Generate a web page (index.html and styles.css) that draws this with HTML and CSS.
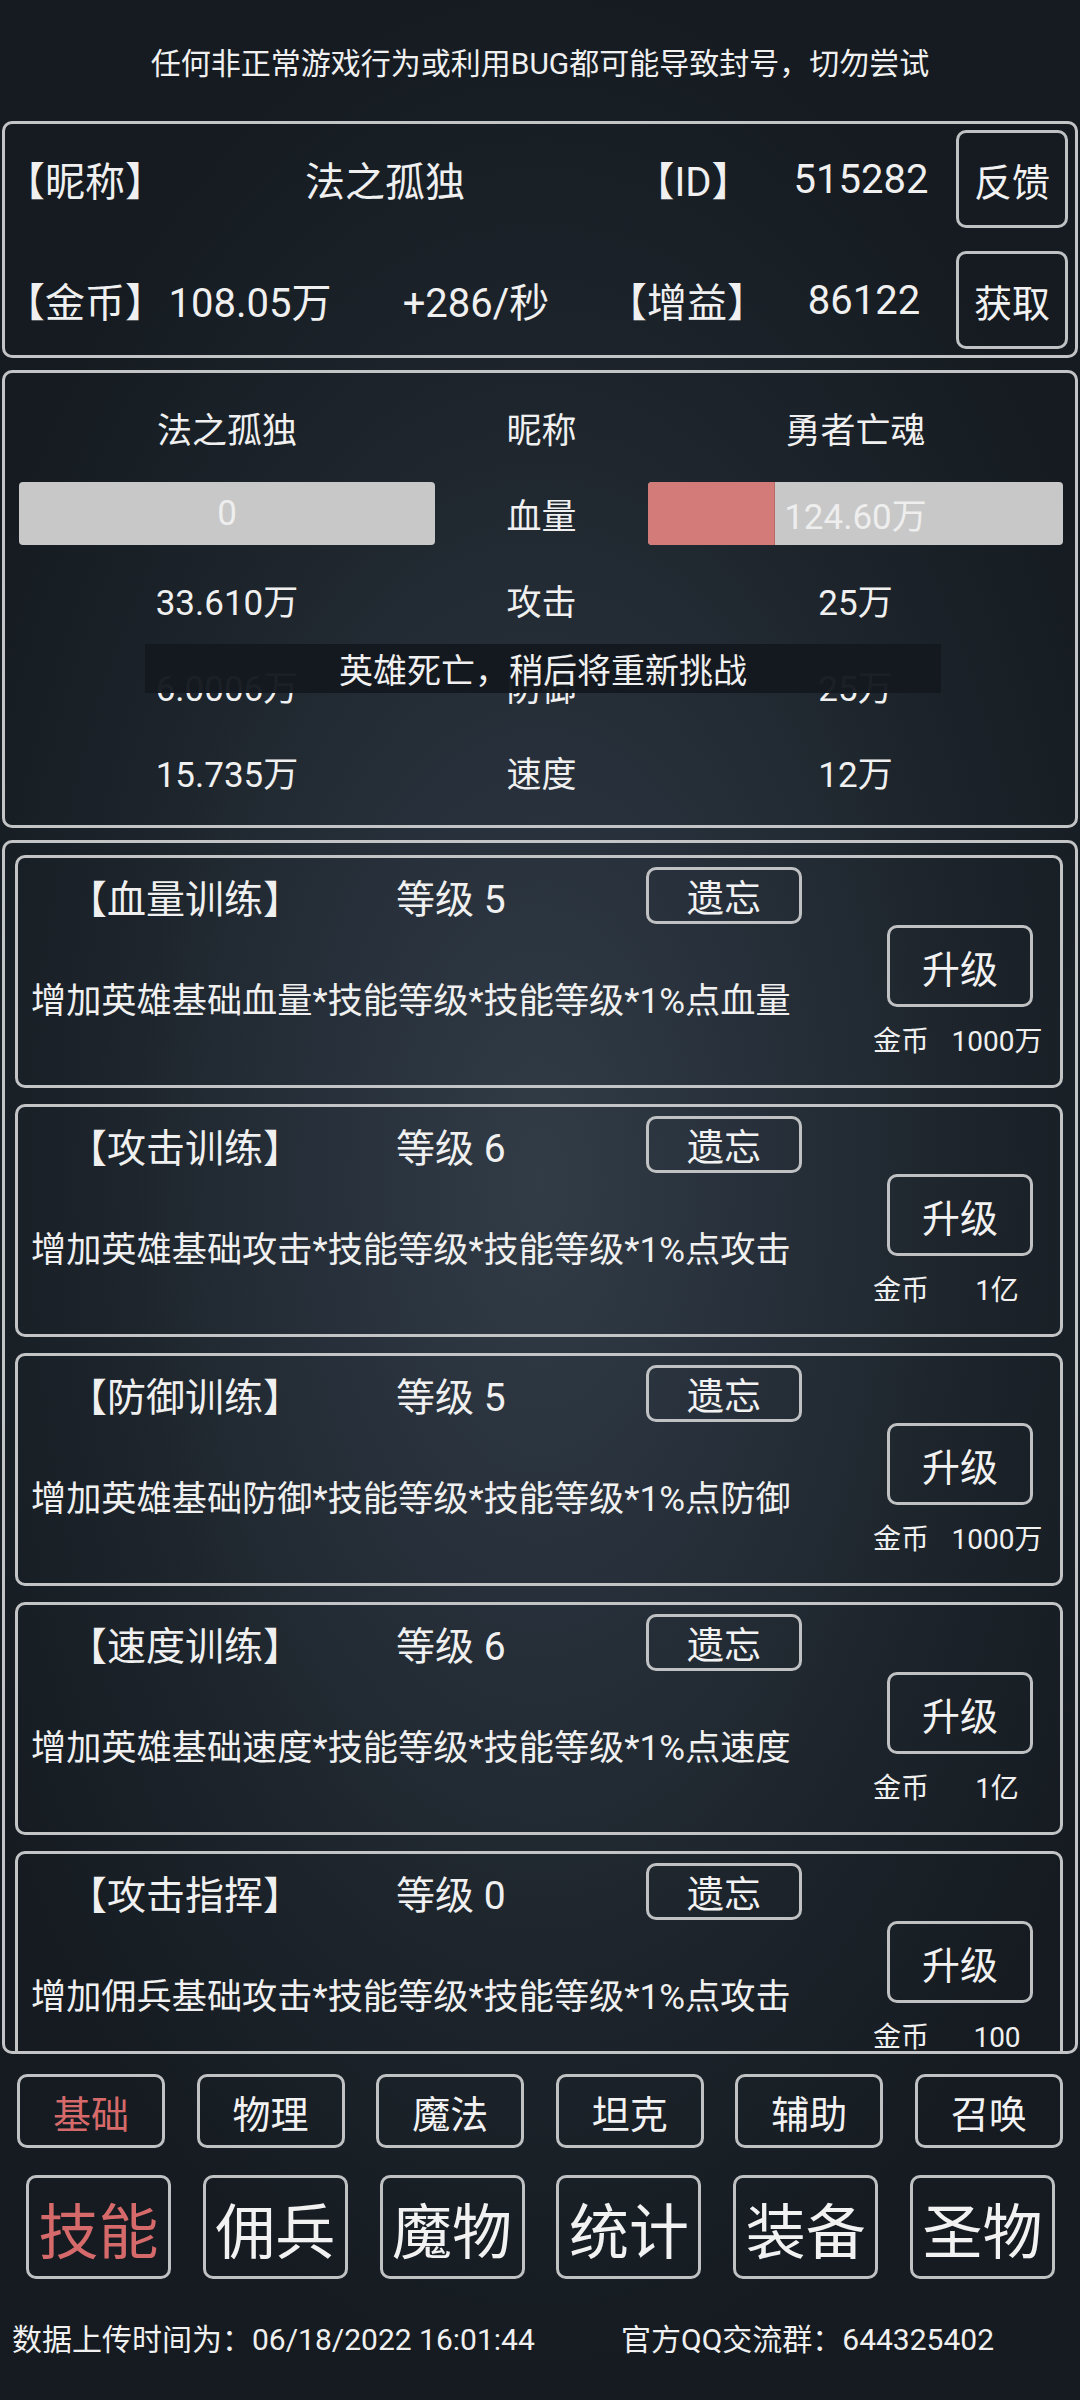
FILE: index.html
```html
<!DOCTYPE html>
<html lang="zh-CN">
<head>
<meta charset="utf-8">
<title>技能</title>
<link rel="stylesheet" href="styles.css">
</head>
<body>
<div class="notice">任何非正常游戏行为或利用BUG都可能导致封号，切勿尝试</div>

<section class="info">
  <div class="info-row r1">
    <span class="lbl">【昵称】</span>
    <span class="c">法之孤独</span>
    <span class="c">【ID】</span>
    <span class="c">515282</span>
    <div class="btn btn-side">反馈</div>
  </div>
  <div class="info-row r2">
    <span class="lbl">【金币】</span>
    <span class="c">108.05万</span>
    <span class="c">+286/秒</span>
    <span class="c">【增益】</span>
    <span class="c">86122</span>
    <div class="btn btn-side">获取</div>
  </div>
</section>

<section class="battle">
  <span>法之孤独</span><span>昵称</span><span>勇者亡魂</span>
  <div class="bar"><span class="bar-text">0</span></div>
  <span>血量</span>
  <div class="bar"><div class="bar-fill" style="width:30.7%"></div><span class="bar-text">124.60万</span></div>
  <span>33.610万</span><span>攻击</span><span>25万</span>
  <span>6.0006万</span><span>防御</span><span>25万</span>
  <span>15.735万</span><span>速度</span><span>12万</span>
  <div class="toast">英雄死亡，稍后将重新挑战</div>
</section>

<section class="skills">
  <div class="card">
    <div class="card-main">
      <div class="title-row"><span class="sk-name">【血量训练】</span><span class="sk-level">等级 5</span><div class="btn btn-forget">遗忘</div></div>
      <div class="desc">增加英雄基础血量*技能等级*技能等级*1%点血量</div>
    </div>
    <div class="card-side"><div class="btn btn-up">升级</div><div class="price"><span class="p-label">金币</span><span class="p-num">1000万</span></div></div>
  </div>
  <div class="card">
    <div class="card-main">
      <div class="title-row"><span class="sk-name">【攻击训练】</span><span class="sk-level">等级 6</span><div class="btn btn-forget">遗忘</div></div>
      <div class="desc">增加英雄基础攻击*技能等级*技能等级*1%点攻击</div>
    </div>
    <div class="card-side"><div class="btn btn-up">升级</div><div class="price"><span class="p-label">金币</span><span class="p-num">1亿</span></div></div>
  </div>
  <div class="card">
    <div class="card-main">
      <div class="title-row"><span class="sk-name">【防御训练】</span><span class="sk-level">等级 5</span><div class="btn btn-forget">遗忘</div></div>
      <div class="desc">增加英雄基础防御*技能等级*技能等级*1%点防御</div>
    </div>
    <div class="card-side"><div class="btn btn-up">升级</div><div class="price"><span class="p-label">金币</span><span class="p-num">1000万</span></div></div>
  </div>
  <div class="card">
    <div class="card-main">
      <div class="title-row"><span class="sk-name">【速度训练】</span><span class="sk-level">等级 6</span><div class="btn btn-forget">遗忘</div></div>
      <div class="desc">增加英雄基础速度*技能等级*技能等级*1%点速度</div>
    </div>
    <div class="card-side"><div class="btn btn-up">升级</div><div class="price"><span class="p-label">金币</span><span class="p-num">1亿</span></div></div>
  </div>
  <div class="card">
    <div class="card-main">
      <div class="title-row"><span class="sk-name">【攻击指挥】</span><span class="sk-level">等级 0</span><div class="btn btn-forget">遗忘</div></div>
      <div class="desc">增加佣兵基础攻击*技能等级*技能等级*1%点攻击</div>
    </div>
    <div class="card-side"><div class="btn btn-up">升级</div><div class="price"><span class="p-label">金币</span><span class="p-num">100</span></div></div>
  </div>
</section>

<nav class="subtabs">
  <div class="btn subtab active">基础</div>
  <div class="btn subtab">物理</div>
  <div class="btn subtab">魔法</div>
  <div class="btn subtab">坦克</div>
  <div class="btn subtab">辅助</div>
  <div class="btn subtab">召唤</div>
</nav>

<nav class="tabs">
  <div class="btn tab active">技能</div>
  <div class="btn tab">佣兵</div>
  <div class="btn tab">魔物</div>
  <div class="btn tab">统计</div>
  <div class="btn tab">装备</div>
  <div class="btn tab">圣物</div>
</nav>

<footer class="footer">
  <span class="f-time">数据上传时间为：06/18/2022 16:01:44</span>
  <span class="f-qq">官方QQ交流群：644325402</span>
</footer>
</body>
</html>
```

FILE: styles.css
```css
* { box-sizing: border-box; margin: 0; padding: 0; }
html, body { width: 1080px; height: 2400px; }
body {
  font-family: Roboto, "Noto Sans CJK SC", "Noto Sans", sans-serif;
  color: #f0f0f0;
  background-color: #161c23;
  background-image: radial-gradient(ellipse 640px 1200px at 540px 1180px, #323c46 0%, #27303a 35%, #1c232a 70%, #151b21 100%);
  overflow: hidden;
  white-space: nowrap;
}

.btn {
  display: flex;
  align-items: center;
  justify-content: center;
  border: 3px solid #bfc1c3;
  border-radius: 10px;
  color: #f2f2f2;
}

.notice {
  height: 121px;
  display: flex;
  align-items: center;
  justify-content: center;
  font-size: 30px;
}

.info {
  margin: 0 2px;
  height: 237px;
  border: 3px solid #c2c4c6;
  border-radius: 10px;
  padding: 6px 7px 6px 0;
  display: flex;
  flex-direction: column;
  gap: 23px;
  font-size: 40px;
}
.info-row { display: grid; height: 98px; align-items: center; }
.r1 { grid-template-columns: 145px 470px 146px 190px 112px; }
.r2 { grid-template-columns: 145px 200px 252px 170px 184px 112px; }
.info .c { text-align: center; }
.info .lbl { text-align: left; }
.btn-side { height: 98px; font-size: 38px; }

.battle {
  position: relative;
  margin: 12px 2px 0;
  height: 458px;
  border: 3px solid #c2c4c6;
  border-radius: 10px;
  padding: 11px 12px 11px 14px;
  display: grid;
  grid-template-columns: 416px 213px 1fr;
  grid-auto-rows: 86px;
  align-items: center;
  text-align: center;
  font-size: 35px;
}
.bar {
  position: relative;
  height: 63px;
  background: #c8c8c8;
  border-radius: 4px;
  overflow: hidden;
  display: flex;
  align-items: center;
  justify-content: center;
  color: #eeeeee;
}
.bar-fill {
  position: absolute;
  left: 0; top: 0; bottom: 0;
  background: #d27b78;
  border-right: 1px solid #b86a67;
}
.bar-text { position: relative; }
.toast {
  position: absolute;
  left: 140px;
  top: 271px;
  width: 796px;
  height: 49px;
  background: rgba(20, 25, 31, 0.97);
  display: flex;
  align-items: center;
  justify-content: center;
  font-size: 34px;
}

.skills {
  margin: 12px 2px 0;
  height: 1214px;
  border: 3px solid #c2c4c6;
  border-radius: 10px;
  overflow: hidden;
  padding: 12px 12px 0 10px;
  display: flex;
  flex-direction: column;
  gap: 16px;
}
.card {
  flex-shrink: 0;
  height: 233px;
  border: 3px solid #c2c4c6;
  border-radius: 10px;
  display: flex;
}
.card-main { flex: 1; }
.title-row {
  margin-top: 9px;
  height: 57px;
  display: flex;
  align-items: center;
  padding-left: 50px;
  font-size: 39px;
}
.sk-name { width: 328px; }
.sk-level { width: 250px; }
.btn-forget { width: 156px; height: 57px; font-size: 37px; }
.desc {
  margin-top: 52px;
  padding-left: 13px;
  height: 50px;
  line-height: 50px;
  font-size: 35.2px;
}
.card-side {
  width: 200px;
  padding-top: 67px;
  display: flex;
  flex-direction: column;
  align-items: center;
}
.btn-up { width: 146px; height: 82px; font-size: 38px; }
.price {
  margin-top: 17px;
  height: 36px;
  line-height: 36px;
  display: flex;
  gap: 16px;
  font-size: 28px;
}
.p-label { width: 58px; }
.p-num { width: 100px; text-align: center; }

.subtabs {
  margin: 20px 17px 0;
  display: flex;
  justify-content: space-between;
}
.subtab { width: 148px; height: 74px; font-size: 38px; }
.tabs {
  margin: 27px 25px 0 26px;
  display: flex;
  justify-content: space-between;
}
.tab { width: 145px; height: 104px; font-size: 60px; }
.active { color: #d66a6a; }

.footer {
  margin-top: 40px;
  height: 42px;
  line-height: 42px;
  padding-left: 12px;
  display: flex;
  font-size: 30px;
}
.f-time { width: 609px; }
```
